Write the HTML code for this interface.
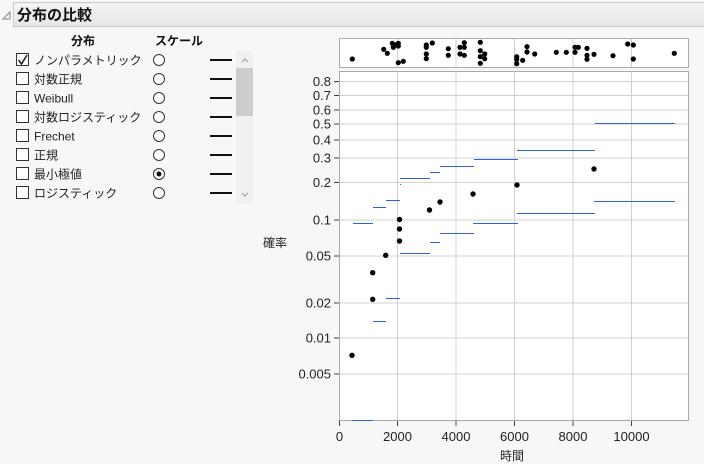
<!DOCTYPE html><html><head><meta charset="utf-8"><style>
body{margin:0;width:704px;height:464px;background:#f7f7f7;overflow:hidden;font-family:"Liberation Sans","Noto Sans CJK JP",sans-serif}
</style></head><body>
<svg width="704" height="464" xmlns="http://www.w3.org/2000/svg" style="position:absolute;left:0;top:0;font-family:'Liberation Sans','Noto Sans CJK JP',sans-serif">
<defs><linearGradient id="g" x1="0" y1="0" x2="0" y2="1"><stop offset="0" stop-color="#f4f4f4"/><stop offset="1" stop-color="#e6e6e6"/></linearGradient></defs>
<rect x="13.5" y="2.5" width="700" height="24" fill="url(#g)" stroke="#c8c8c8"/>
<path d="M3 19 L10 12 L10 19 Z" fill="none" stroke="#888" stroke-width="1"/>
<text x="17" y="20" font-size="15" font-weight="bold" fill="#111">分布の比較</text>
<text x="71" y="45" font-size="12" font-weight="bold" fill="#111">分布</text>
<text x="155" y="45" font-size="12" font-weight="bold" fill="#111">スケール</text>
<rect x="236" y="51" width="17" height="153" fill="#f0f0f0"/>
<rect x="236" y="68" width="17" height="48" fill="#cdcdcd"/>
<path d="M242 62 L245 59 L248 62" fill="none" stroke="#999"/>
<path d="M242 193 L245 196 L248 193" fill="none" stroke="#999"/>
<g font-size="12" fill="#222">
<g transform="translate(0,60)"><rect x="16.5" y="-6.5" width="12" height="12" fill="#fff" stroke="#333"/><path d="M18.5 0 L21.5 4 L27 -5" fill="none" stroke="#222" stroke-width="1.6"/><text x="34" y="4.5">ノンパラメトリック</text><circle cx="159" cy="0" r="5.5" fill="#fff" stroke="#333"/><rect x="210" y="-1" width="22" height="2" fill="#111"/></g>
<g transform="translate(0,79)"><rect x="16.5" y="-6.5" width="12" height="12" fill="#fff" stroke="#333"/><text x="34" y="4.5">対数正規</text><circle cx="159" cy="0" r="5.5" fill="#fff" stroke="#333"/><rect x="210" y="-1" width="22" height="2" fill="#111"/></g>
<g transform="translate(0,98)"><rect x="16.5" y="-6.5" width="12" height="12" fill="#fff" stroke="#333"/><text x="34" y="4.5">Weibull</text><circle cx="159" cy="0" r="5.5" fill="#fff" stroke="#333"/><rect x="210" y="-1" width="22" height="2" fill="#111"/></g>
<g transform="translate(0,117)"><rect x="16.5" y="-6.5" width="12" height="12" fill="#fff" stroke="#333"/><text x="34" y="4.5">対数ロジスティック</text><circle cx="159" cy="0" r="5.5" fill="#fff" stroke="#333"/><rect x="210" y="-1" width="22" height="2" fill="#111"/></g>
<g transform="translate(0,136)"><rect x="16.5" y="-6.5" width="12" height="12" fill="#fff" stroke="#333"/><text x="34" y="4.5">Frechet</text><circle cx="159" cy="0" r="5.5" fill="#fff" stroke="#333"/><rect x="210" y="-1" width="22" height="2" fill="#111"/></g>
<g transform="translate(0,155)"><rect x="16.5" y="-6.5" width="12" height="12" fill="#fff" stroke="#333"/><text x="34" y="4.5">正規</text><circle cx="159" cy="0" r="5.5" fill="#fff" stroke="#333"/><rect x="210" y="-1" width="22" height="2" fill="#111"/></g>
<g transform="translate(0,174)"><rect x="16.5" y="-6.5" width="12" height="12" fill="#fff" stroke="#333"/><text x="34" y="4.5">最小極値</text><circle cx="159" cy="0" r="5.5" fill="#fff" stroke="#333"/><circle cx="159" cy="0" r="2.5" fill="#111"/><rect x="210" y="-1" width="22" height="2" fill="#111"/></g>
<g transform="translate(0,193)"><rect x="16.5" y="-6.5" width="12" height="12" fill="#fff" stroke="#333"/><text x="34" y="4.5">ロジスティック</text><circle cx="159" cy="0" r="5.5" fill="#fff" stroke="#333"/><rect x="210" y="-1" width="22" height="2" fill="#111"/></g>
</g>
<!-- top dot plot -->
<rect x="339.5" y="38.5" width="349" height="29" fill="#fff" stroke="#aaa"/>
<g stroke="#d0d0d0"><line x1="397.5" y1="39" x2="397.5" y2="67"/><line x1="456" y1="39" x2="456" y2="67"/><line x1="514.5" y1="39" x2="514.5" y2="67"/><line x1="573" y1="39" x2="573" y2="67"/><line x1="631.5" y1="39" x2="631.5" y2="67"/></g>
<g fill="#000">
<circle cx="352.3" cy="59" r="2.6"/><circle cx="383.7" cy="49.3" r="2.6"/><circle cx="387.3" cy="53.3" r="2.6"/><circle cx="392.3" cy="43.3" r="2.6"/><circle cx="393.3" cy="47.3" r="2.6"/><circle cx="395" cy="45" r="2.6"/><circle cx="398.3" cy="43.3" r="2.6"/><circle cx="398.3" cy="46" r="2.6"/><circle cx="398.3" cy="62.7" r="2.6"/><circle cx="403.3" cy="61.3" r="2.6"/><circle cx="426.3" cy="45" r="2.6"/><circle cx="426.3" cy="47.3" r="2.6"/><circle cx="426.3" cy="54" r="2.6"/><circle cx="426.3" cy="58.7" r="2.6"/><circle cx="432.3" cy="43" r="2.6"/><circle cx="448.3" cy="48.7" r="2.6"/><circle cx="448.3" cy="55.3" r="2.6"/><circle cx="460" cy="47.3" r="2.6"/><circle cx="460" cy="54" r="2.6"/><circle cx="464.3" cy="42.7" r="2.6"/><circle cx="464.3" cy="47.3" r="2.6"/><circle cx="464.3" cy="55.3" r="2.6"/><circle cx="480.3" cy="42.3" r="2.6"/><circle cx="480.3" cy="50.7" r="2.6"/><circle cx="480.3" cy="56.7" r="2.6"/><circle cx="480.3" cy="63.3" r="2.6"/><circle cx="484.7" cy="54" r="2.6"/><circle cx="484.7" cy="58.7" r="2.6"/><circle cx="516.7" cy="56.7" r="2.6"/><circle cx="516.7" cy="59.3" r="2.6"/><circle cx="516.7" cy="63.7" r="2.6"/><circle cx="522.7" cy="60.3" r="2.6"/><circle cx="527" cy="46.7" r="2.6"/><circle cx="527" cy="52" r="2.6"/><circle cx="534.7" cy="54" r="2.6"/><circle cx="556.3" cy="52.3" r="2.6"/><circle cx="566.3" cy="52.3" r="2.6"/><circle cx="575" cy="47.3" r="2.6"/><circle cx="575" cy="52.3" r="2.6"/><circle cx="578.3" cy="47.3" r="2.6"/><circle cx="587" cy="48.3" r="2.6"/><circle cx="587" cy="55.3" r="2.6"/><circle cx="587" cy="59.3" r="2.6"/><circle cx="594" cy="54.3" r="2.6"/><circle cx="613" cy="55.7" r="2.6"/><circle cx="627.7" cy="44" r="2.6"/><circle cx="633.3" cy="45" r="2.6"/><circle cx="633.3" cy="59" r="2.6"/><circle cx="674.3" cy="53.3" r="2.6"/>
</g>
<!-- main plot -->
<rect x="339.5" y="71.5" width="349" height="349" fill="#fff" stroke="#aaa"/>
<g stroke="#d0d0d0">
<line x1="397.5" y1="72" x2="397.5" y2="420"/><line x1="456" y1="72" x2="456" y2="420"/><line x1="514.5" y1="72" x2="514.5" y2="420"/><line x1="573" y1="72" x2="573" y2="420"/><line x1="631.5" y1="72" x2="631.5" y2="420"/>
<line x1="340" y1="81.5" x2="688" y2="81.5"/><line x1="340" y1="95.5" x2="688" y2="95.5"/><line x1="340" y1="110" x2="688" y2="110"/><line x1="340" y1="124" x2="688" y2="124"/><line x1="340" y1="140" x2="688" y2="140"/><line x1="340" y1="158" x2="688" y2="158"/><line x1="340" y1="182.5" x2="688" y2="182.5"/><line x1="340" y1="220" x2="688" y2="220"/><line x1="340" y1="256" x2="688" y2="256"/><line x1="340" y1="303" x2="688" y2="303"/><line x1="340" y1="338" x2="688" y2="338"/><line x1="340" y1="374" x2="688" y2="374"/>
</g>
<g stroke="#444"><line x1="334" y1="81.5" x2="339" y2="81.5"/><line x1="334" y1="95.5" x2="339" y2="95.5"/><line x1="334" y1="110" x2="339" y2="110"/><line x1="334" y1="124" x2="339" y2="124"/><line x1="334" y1="140" x2="339" y2="140"/><line x1="334" y1="158" x2="339" y2="158"/><line x1="334" y1="182.5" x2="339" y2="182.5"/><line x1="334" y1="220" x2="339" y2="220"/><line x1="334" y1="256" x2="339" y2="256"/><line x1="334" y1="303" x2="339" y2="303"/><line x1="334" y1="338" x2="339" y2="338"/><line x1="334" y1="374" x2="339" y2="374"/>
<line x1="339.5" y1="421" x2="339.5" y2="426"/><line x1="397.5" y1="421" x2="397.5" y2="426"/><line x1="456" y1="421" x2="456" y2="426"/><line x1="514.5" y1="421" x2="514.5" y2="426"/><line x1="573" y1="421" x2="573" y2="426"/><line x1="631.5" y1="421" x2="631.5" y2="426"/></g>
<g font-size="13" fill="#222" text-anchor="end">
<text x="331" y="86">0.8</text><text x="331" y="100">0.7</text><text x="331" y="114.5">0.6</text><text x="331" y="128.5">0.5</text><text x="331" y="144.5">0.4</text><text x="331" y="162.5">0.3</text><text x="331" y="187">0.2</text><text x="331" y="224.5">0.1</text><text x="331" y="260.5">0.05</text><text x="331" y="307.5">0.02</text><text x="331" y="342.5">0.01</text><text x="331" y="378.5">0.005</text>
</g>
<g font-size="13" fill="#222" text-anchor="middle">
<text x="339.5" y="441">0</text><text x="397.5" y="441">2000</text><text x="456" y="441">4000</text><text x="514.5" y="441">6000</text><text x="573" y="441">8000</text><text x="631.5" y="441">10000</text>
</g>
<text x="512" y="460" font-size="12" fill="#222" text-anchor="middle">時間</text>
<text x="263" y="247" font-size="12" fill="#222">確率</text>
<g stroke="#2a62e0" stroke-width="1">
<line x1="353" y1="223.5" x2="373" y2="223.5"/><line x1="373" y1="207.5" x2="386" y2="207.5"/><line x1="386" y1="200.5" x2="400" y2="200.5"/><line x1="400" y1="184.5" x2="401" y2="184.5"/><line x1="400" y1="178.5" x2="430" y2="178.5"/><line x1="430" y1="172.5" x2="440" y2="172.5"/><line x1="440" y1="166.5" x2="474" y2="166.5"/><line x1="474" y1="159.5" x2="518" y2="159.5"/><line x1="517" y1="150.5" x2="595" y2="150.5"/><line x1="595" y1="123.5" x2="675" y2="123.5"/><line x1="594" y1="201.5" x2="675" y2="201.5"/><line x1="517" y1="213.5" x2="595" y2="213.5"/><line x1="473" y1="223.5" x2="518" y2="223.5"/>
<line x1="440" y1="233.5" x2="474" y2="233.5"/><line x1="430" y1="242.5" x2="440" y2="242.5"/><line x1="400" y1="253.5" x2="430" y2="253.5"/><line x1="386" y1="298.5" x2="400" y2="298.5"/><line x1="373" y1="321.5" x2="386" y2="321.5"/><line x1="352" y1="420.5" x2="373" y2="420.5"/>
</g>
<g fill="#000">
<circle cx="399.5" cy="219.5" r="2.7"/><circle cx="473" cy="194" r="2.7"/><circle cx="517" cy="185" r="2.7"/><circle cx="594" cy="169" r="2.7"/><circle cx="429.5" cy="210" r="2.7"/><circle cx="440" cy="202" r="2.7"/><circle cx="399.5" cy="229" r="2.7"/><circle cx="399.5" cy="241" r="2.7"/><circle cx="385.7" cy="255.3" r="2.7"/><circle cx="372.7" cy="272.7" r="2.7"/><circle cx="372.7" cy="299.3" r="2.7"/><circle cx="352" cy="355.3" r="2.7"/>
</g>
</svg>
</body></html>
